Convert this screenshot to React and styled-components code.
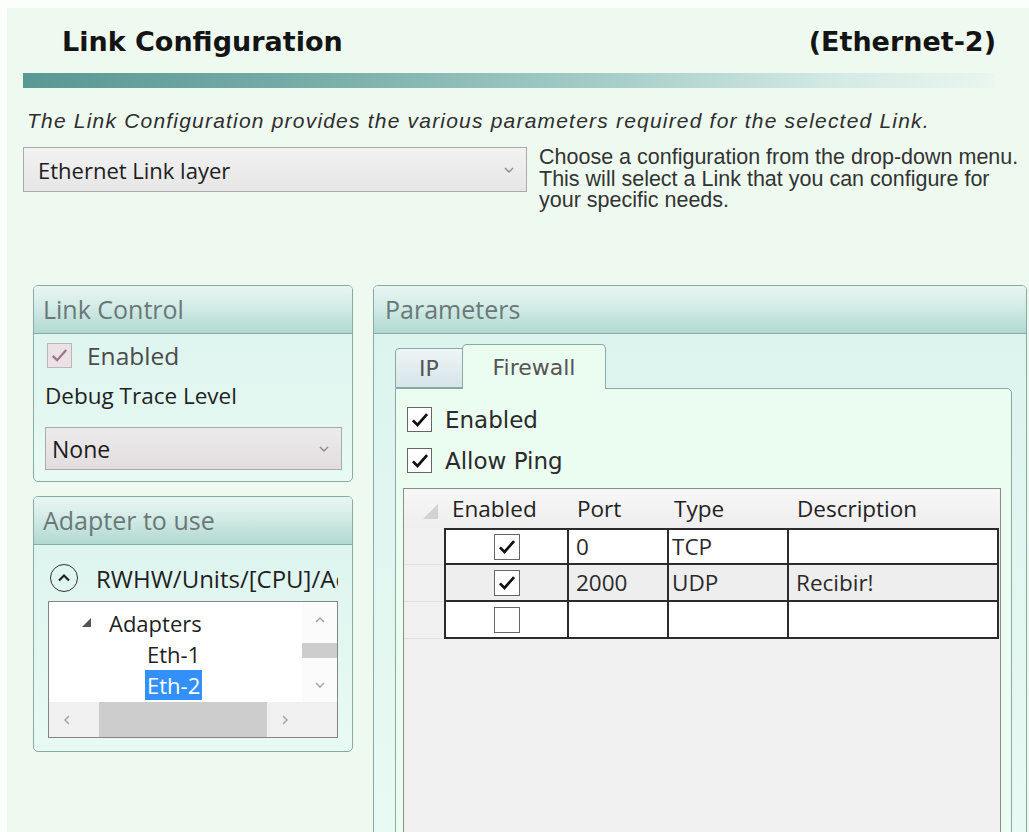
import styled, { createGlobalStyle } from 'styled-components'

const ui = `'Open Sans', 'Noto Sans', sans-serif`
const verdana = `'DejaVu Sans', Verdana, sans-serif`
const arial = `'Liberation Sans', Arial, sans-serif`

const edge = '#88aaa5'

const GlobalStyle = createGlobalStyle`
  html, body {
    margin: 0;
    padding: 0;
    background: #fbfefa;
  }
  body {
    width: 1029px;
    height: 832px;
    overflow: hidden;
  }
`

const Page = styled.div`
  margin: 8px 0 0 7px;
  width: 1022px;
  height: 824px;
  overflow: hidden;
  background: #eefaf0;
  font-family: ${ui};
  color: #1f1f1f;
`

const TitleRow = styled.div`
  display: flex;
  justify-content: space-between;
  padding: 18px 33px 0 55px;
  font: 700 27px/32px ${verdana};
  color: #141414;
`

const TitleBar = styled.div`
  margin: 15px 0 0 16px;
  width: 972px;
  height: 15px;
  background: linear-gradient(90deg, #5a9893 0%, #78ada8 30%, #a6cdc8 60%, #d6ebe6 85%, #eaf6f0 100%);
`

const Intro = styled.div`
  margin: 21px 0 0 20px;
  font: italic 21px/24px ${arial};
  letter-spacing: 1.2px;
  color: #2e2e2e;
  white-space: nowrap;
`

const ChooserRow = styled.div`
  display: flex;
  align-items: flex-start;
  gap: 12px;
  margin: 14px 0 0 16px;
`

const Select = styled.div`
  box-sizing: border-box;
  display: flex;
  align-items: center;
  justify-content: space-between;
  width: ${p => p.$width}px;
  height: ${p => p.$height}px;
  padding: 0 12px 0 ${p => p.$pad || 14}px;
  border: 1px solid #aaaaaa;
  background: ${p => p.$tint
    ? 'linear-gradient(#ecebeb, #e3dde0)'
    : 'linear-gradient(#f2f2f2, #e6e6e6)'};
  font-size: ${p => p.$size || 22}px;
  color: #1c1c1c;
`

const HelpText = styled.div`
  font: 21.5px/21.7px ${arial};
  color: #333;
  white-space: nowrap;
`

const Main = styled.div`
  display: grid;
  grid-template-columns: 320px 1fr;
  column-gap: 20px;
  align-items: start;
  margin-top: 73px;
  padding: 0 2px 0 26px;
`

const Column = styled.div`
  display: flex;
  flex-direction: column;
  gap: 14px;
`

const Panel = styled.div`
  border: 1px solid ${edge};
  border-radius: 5px;
  background: linear-gradient(180deg, #dcf3ed, #e8faf4);
  overflow: hidden;
  height: ${p => (p.$height ? `${p.$height}px` : 'auto')};
`

const PanelHeader = styled.div`
  box-sizing: border-box;
  height: 48px;
  padding-left: ${p => p.$pad || 9}px;
  border-bottom: 1px solid ${edge};
  background: linear-gradient(180deg, #e9f6f2 0%, #d3ebe6 45%, #b1d8d2 100%);
  font-size: 25px;
  line-height: 46px;
  color: #6a7878;
`

const PanelBody = styled.div`
  display: flex;
  flex-direction: column;
  padding: ${p => p.$pad};
`

const CheckRow = styled.label`
  display: flex;
  align-items: center;
  gap: ${p => p.$gap}px;
  height: ${p => p.$height}px;
  margin-left: ${p => p.$indent || 0}px;
  font-family: ${p => (p.$verdana ? verdana : ui)};
  font-size: ${p => p.$size}px;
  color: ${p => (p.$muted ? '#4a4a4a' : '#2a2a2a')};
`

const Box = styled.span`
  box-sizing: border-box;
  display: inline-flex;
  align-items: center;
  justify-content: center;
  width: ${p => p.$size || 24}px;
  height: ${p => p.$size || 24}px;
  border: 1px solid ${p => (p.$muted ? '#bdb3b8' : '#666')};
  background: ${p => (p.$muted ? '#ebe2e6' : '#fff')};
`

const FieldLabel = styled.div`
  margin-top: 14px;
  font-size: 22.5px;
  line-height: 28px;
`

const SelectGap = styled.div`
  margin-top: 17px;
`

const PathRow = styled.div`
  display: flex;
  align-items: center;
  gap: 18px;
  height: 28px;
  margin: 19px 0 0 2px;
  overflow: hidden;
  white-space: nowrap;
  font-size: 24px;
`

const Circle = styled.span`
  flex: none;
  box-sizing: border-box;
  display: inline-flex;
  align-items: center;
  justify-content: center;
  width: 28px;
  height: 28px;
  border: 1.5px solid #333;
  border-radius: 50%;
`

const TreeBox = styled.div`
  display: grid;
  grid-template-columns: 1fr 35px;
  grid-template-rows: 100px 35px;
  margin-top: 9px;
  border: 1px solid #858585;
  background: #fff;
`

const TreeList = styled.div`
  padding-top: 5px;
  overflow: hidden;
  font-size: 22px;
`

const TreeRow = styled.div`
  display: flex;
  align-items: center;
  gap: 18px;
  height: 31px;
  padding-left: ${p => p.$indent}px;
`

const Selected = styled.span`
  padding: 0 2px;
  line-height: 30px;
  background: #3390fb;
  color: #fff;
`

const VScroll = styled.div`
  display: flex;
  flex-direction: column;
  background: #fbfbfb;
`

const HScroll = styled.div`
  display: flex;
  background: #f0f0f0;
`

const ArrowBtn = styled.span`
  flex: none;
  display: flex;
  align-items: center;
  justify-content: center;
  width: 35px;
  height: 35px;
`

const Track = styled.div`
  flex: 1;
  display: flex;
  flex-direction: ${p => (p.$vertical ? 'column' : 'row')};
`

const Thumb = styled.div`
  background: #cdcdcd;
  ${p => (p.$vertical
    ? 'margin-top: 6px; height: 15px;'
    : 'margin-left: 15px; flex: 1;')}
`

const Corner = styled.div`
  background: #f0f0f0;
`

const TabStrip = styled.div`
  display: flex;
  align-items: flex-end;
  height: 44px;
  position: relative;
  z-index: 1;
`

const Tab = styled.div`
  box-sizing: border-box;
  display: flex;
  align-items: center;
  justify-content: center;
  width: ${p => p.$width}px;
  height: ${p => (p.$active ? 45 : 40)}px;
  margin-bottom: ${p => (p.$active ? -1 : 0)}px;
  margin-left: ${p => (p.$active ? -1 : 0)}px;
  border: 1px solid ${edge};
  border-bottom: ${p => (p.$active ? 'none' : `1px solid ${edge}`)};
  border-radius: ${p => (p.$active ? '5px 5px 0 0' : '4px 0 0 0')};
  background: ${p => (p.$active ? '#ebfcf1' : 'linear-gradient(#eef5f7, #d6e5e9)')};
  font: 22px ${verdana};
  color: #555;
`

const TabContent = styled.div`
  display: flex;
  flex-direction: column;
  height: 460px;
  padding: 10px 10px 0 7px;
  border: 1px solid ${edge};
  border-radius: 0 5px 0 0;
  background: #ebfcf1;
`

const Grid = styled.div`
  display: grid;
  grid-template-columns: 40px 125px 100px 120px 210px;
  grid-auto-rows: min-content;
  align-content: start;
  height: 360px;
  margin-top: 7px;
  border: 1px solid #8c8c8c;
  background: #f0f0f0;
  font-size: 22.5px;
`

const HeadCell = styled.div`
  display: flex;
  align-items: center;
  justify-content: ${p => (p.$corner ? 'flex-end' : 'flex-start')};
  height: 39px;
  padding: ${p => (p.$corner ? '6px 6px 0 0' : `0 0 0 ${p.$pad || 8}px`)};
  box-sizing: border-box;
  background: linear-gradient(#f7f7f7, #eeeeee);
  color: #222;
`

const RowHead = styled.div`
  border-bottom: 1px solid #e2e2e2;
  background: #f0f0f0;
`

const Cell = styled.div`
  box-sizing: border-box;
  display: flex;
  align-items: center;
  justify-content: ${p => (p.$center ? 'center' : 'flex-start')};
  height: 37px;
  padding-left: ${p => (p.$center ? 0 : p.$pad || 7)}px;
  border-right: 2px solid #2b2b2b;
  border-bottom: 2px solid #2b2b2b;
  border-top: ${p => (p.$first ? '2px solid #2b2b2b' : 'none')};
  border-left: ${p => (p.$lead ? '2px solid #2b2b2b' : 'none')};
  background: ${p => (p.$alt ? '#eeeeee' : '#fff')};
  color: #2a2a2a;
`

const Check = ({ color = '#111', width = 3.2, size = 20 }) => (
  <svg width={size} height={size} viewBox="0 0 24 24">
    <path d="M3.5 12.5l5.5 5.5L20.5 5" fill="none" stroke={color} strokeWidth={width} />
  </svg>
)

const Chevron = ({ dir = 'down', color = '#8a8a8a', size = 10 }) => {
  const paths = {
    down: 'M1 3l4 4 4-4',
    up: 'M1 7l4-4 4 4',
    left: 'M7 1L3 5l4 4',
    right: 'M3 1l4 4-4 4',
  }
  return (
    <svg width={size} height={size} viewBox="0 0 10 10">
      <path d={paths[dir]} fill="none" stroke={color} strokeWidth="1.4" />
    </svg>
  )
}

const rules = [
  { on: true, port: '0', type: 'TCP', note: '' },
  { on: true, port: '2000', type: 'UDP', note: 'Recibir!' },
  { on: false, port: '', type: '', note: '' },
]

const App = () => (
  <Page>
    <GlobalStyle />
    <TitleRow>
      <span>Link Configuration</span>
      <span>(Ethernet-2)</span>
    </TitleRow>
    <TitleBar />
    <Intro>The Link Configuration provides the various parameters required for the selected Link.</Intro>

    <ChooserRow>
      <Select $width={504} $height={45}>
        <span>Ethernet Link layer</span>
        <Chevron />
      </Select>
      <HelpText>
        Choose a configuration from the drop-down menu.<br />
        This will select a Link that you can configure for<br />
        your specific needs.
      </HelpText>
    </ChooserRow>

    <Main>
      <Column>
        <Panel>
          <PanelHeader>Link Control</PanelHeader>
          <PanelBody $pad="9px 10px 11px 11px">
            <CheckRow $gap={15} $height={25} $indent={2} $size={24.5} $muted>
              <Box $muted $size={25}><Check color="#a0728a" width={2.8} size={19} /></Box>
              Enabled
            </CheckRow>
            <FieldLabel>Debug Trace Level</FieldLabel>
            <SelectGap>
              <Select $width={297} $height={43} $pad={6} $size={23} $tint>
                <span>None</span>
                <Chevron />
              </Select>
            </SelectGap>
          </PanelBody>
        </Panel>

        <Panel>
          <PanelHeader>Adapter to use</PanelHeader>
          <PanelBody $pad="0 14px 13px 14px">
            <PathRow>
              <Circle>
                <svg width="16" height="16" viewBox="0 0 16 16">
                  <path d="M3 10.5l5-5 5 5" fill="none" stroke="#222" strokeWidth="2.2" />
                </svg>
              </Circle>
              <span>RWHW/Units/[CPU]/Adapters</span>
            </PathRow>
            <TreeBox>
              <TreeList>
                <TreeRow $indent={33}>
                  <svg width="9" height="9" viewBox="0 0 9 9">
                    <polygon points="9,0 9,9 0,9" fill="#555" />
                  </svg>
                  <span>Adapters</span>
                </TreeRow>
                <TreeRow $indent={98}>Eth-1</TreeRow>
                <TreeRow $indent={96}><Selected>Eth-2</Selected></TreeRow>
              </TreeList>
              <VScroll>
                <ArrowBtn><Chevron dir="up" color="#a0a0a0" /></ArrowBtn>
                <Track $vertical><Thumb $vertical /></Track>
                <ArrowBtn><Chevron dir="down" color="#a0a0a0" /></ArrowBtn>
              </VScroll>
              <HScroll>
                <ArrowBtn><Chevron dir="left" color="#a0a0a0" /></ArrowBtn>
                <Track><Thumb /></Track>
                <ArrowBtn><Chevron dir="right" color="#a0a0a0" /></ArrowBtn>
              </HScroll>
              <Corner />
            </TreeBox>
          </PanelBody>
        </Panel>
      </Column>

      <Panel $height={560}>
        <PanelHeader $pad={11}>Parameters</PanelHeader>
        <PanelBody $pad="10px 14px 0 21px">
          <TabStrip>
            <Tab $width={68}>IP</Tab>
            <Tab $width={144} $active>Firewall</Tab>
          </TabStrip>
          <TabContent>
            <CheckRow $verdana $gap={13} $height={41} $indent={4} $size={23}>
              <Box $size={25}><Check /></Box>
              Enabled
            </CheckRow>
            <CheckRow $verdana $gap={13} $height={41} $indent={4} $size={23}>
              <Box $size={25}><Check /></Box>
              Allow Ping
            </CheckRow>

            <Grid>
              <HeadCell $corner>
                <svg width="15" height="15" viewBox="0 0 15 15">
                  <polygon points="15,0 15,15 0,15" fill="#d2d2d2" />
                </svg>
              </HeadCell>
              <HeadCell>Enabled</HeadCell>
              <HeadCell>Port</HeadCell>
              <HeadCell $pad={5}>Type</HeadCell>
              <HeadCell>Description</HeadCell>

              {rules.map((r, i) => {
                const alt = i % 2 === 1
                const first = i === 0
                return [
                  <RowHead key={`h${i}`} />,
                  <Cell key={`e${i}`} $center $lead $first={first} $alt={alt}>
                    <Box $size={26}>{r.on && <Check />}</Box>
                  </Cell>,
                  <Cell key={`p${i}`} $first={first} $alt={alt}>{r.port}</Cell>,
                  <Cell key={`t${i}`} $pad={3} $first={first} $alt={alt}>{r.type}</Cell>,
                  <Cell key={`d${i}`} $first={first} $alt={alt}>{r.note}</Cell>,
                ]
              })}
            </Grid>
          </TabContent>
        </PanelBody>
      </Panel>
    </Main>
  </Page>
)

export default App
